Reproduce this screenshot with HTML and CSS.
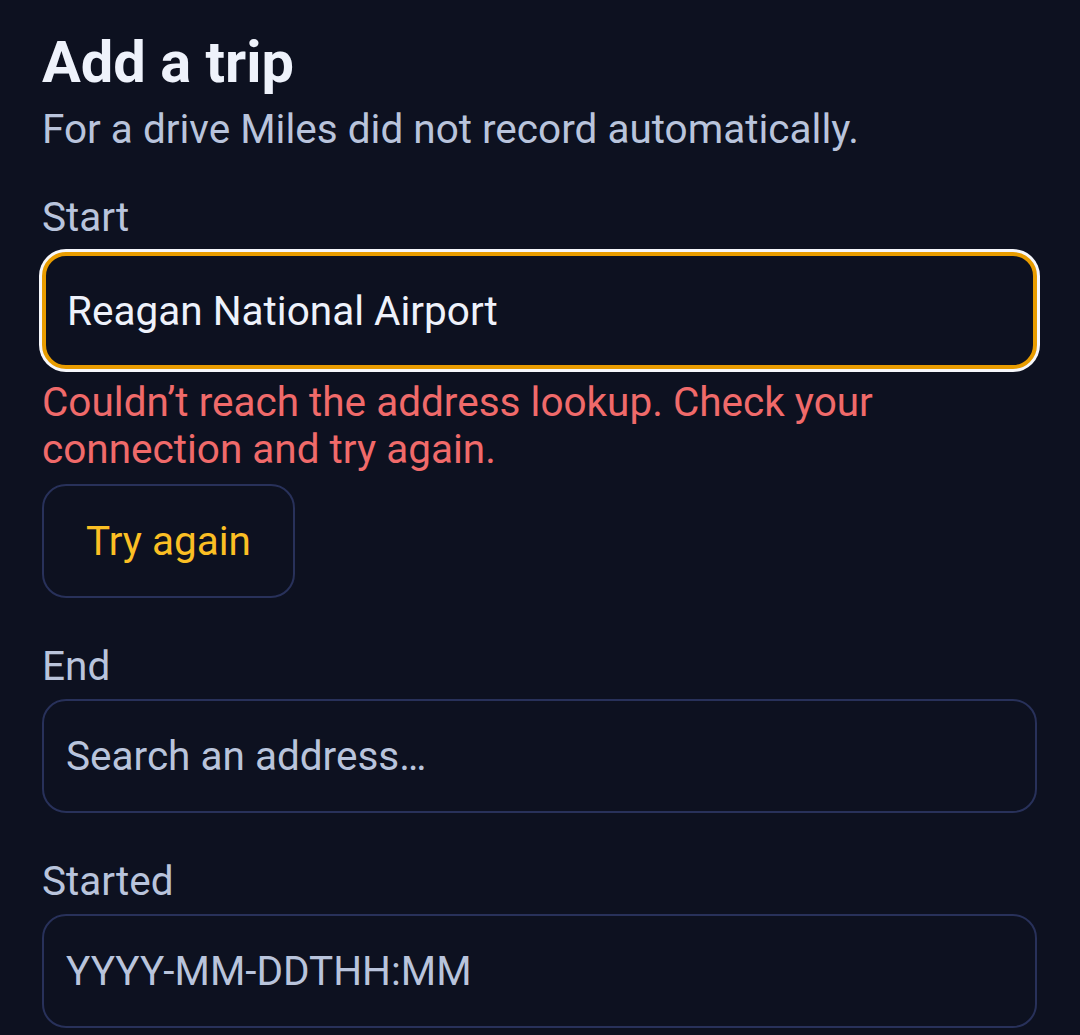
FILE: index.html
```html
<!DOCTYPE html>
<html lang="en">
<head>
<meta charset="utf-8">
<title>Add a trip</title>
<link rel="stylesheet" href="styles.css">
</head>
<body>
<main class="page">
  <header class="head">
    <h1 class="title">Add a trip</h1>
    <p class="subtitle">For a drive Miles did not record automatically.</p>
  </header>

  <div class="field">
    <label class="label" for="start">Start</label>
    <input class="input is-focused" id="start" type="text" value="Reagan National Airport">
    <p class="error">Couldn’t reach the address lookup. Check your connection and try again.</p>
    <button class="retry" type="button">Try again</button>
  </div>

  <div class="field">
    <label class="label" for="end">End</label>
    <input class="input" id="end" type="text" placeholder="Search an address…">
  </div>

  <div class="field">
    <label class="label" for="started">Started</label>
    <input class="input" id="started" type="text" placeholder="YYYY-MM-DDTHH:MM">
  </div>
</main>
</body>
</html>
```

FILE: styles.css
```css
html, body {
  margin: 0;
  padding: 0;
  background: #0d1120;
}

body {
  font-family: Roboto, "Noto Sans", "Liberation Sans", sans-serif;
  color: #eef2fb;
}

.page {
  padding: 28px 43px 40px 42px;
  display: flex;
  flex-direction: column;
  gap: 43px;
}

.head {
  display: flex;
  flex-direction: column;
  gap: 9px;
  margin-bottom: -4px;
}

.title {
  margin: 0;
  font-size: 57.75px;
  line-height: 69px;
  font-weight: 700;
  color: #eef2fb;
}

.subtitle {
  margin: 0;
  font-size: 40.5px;
  line-height: 47px;
  color: #b9c4dc;
}

.field {
  display: flex;
  flex-direction: column;
  align-items: flex-start;
}

.label {
  font-size: 40.5px;
  line-height: 50px;
  color: #b9c4dc;
  margin-bottom: 8px;
}

.input {
  box-sizing: border-box;
  width: 100%;
  height: 114px;
  margin: 0;
  padding: 0 22px;
  border: 2px solid #28315a;
  border-radius: 24px;
  background: #0d1120;
  color: #eef2fb;
  font-family: inherit;
  font-size: 40.5px;
  outline: none;
}

.input::placeholder {
  color: #b9c4dc;
  opacity: 1;
}

.input.is-focused {
  margin-top: 2px;
  height: 117px;
  border: 4px solid #e89c00;
  padding: 0 21px;
  box-shadow: 0 0 0 3px #f6f7fb;
}

.error {
  margin: 10px 0 0;
  font-size: 40.5px;
  line-height: 47px;
  color: #f06a6a;
}

.retry {
  margin-top: 11px;
  box-sizing: border-box;
  height: 114px;
  padding: 0 42px;
  border: 2px solid #28315a;
  border-radius: 24px;
  background: #0d1120;
  color: #fbbf24;
  font-family: inherit;
  font-size: 40.5px;
  cursor: pointer;
}
```
